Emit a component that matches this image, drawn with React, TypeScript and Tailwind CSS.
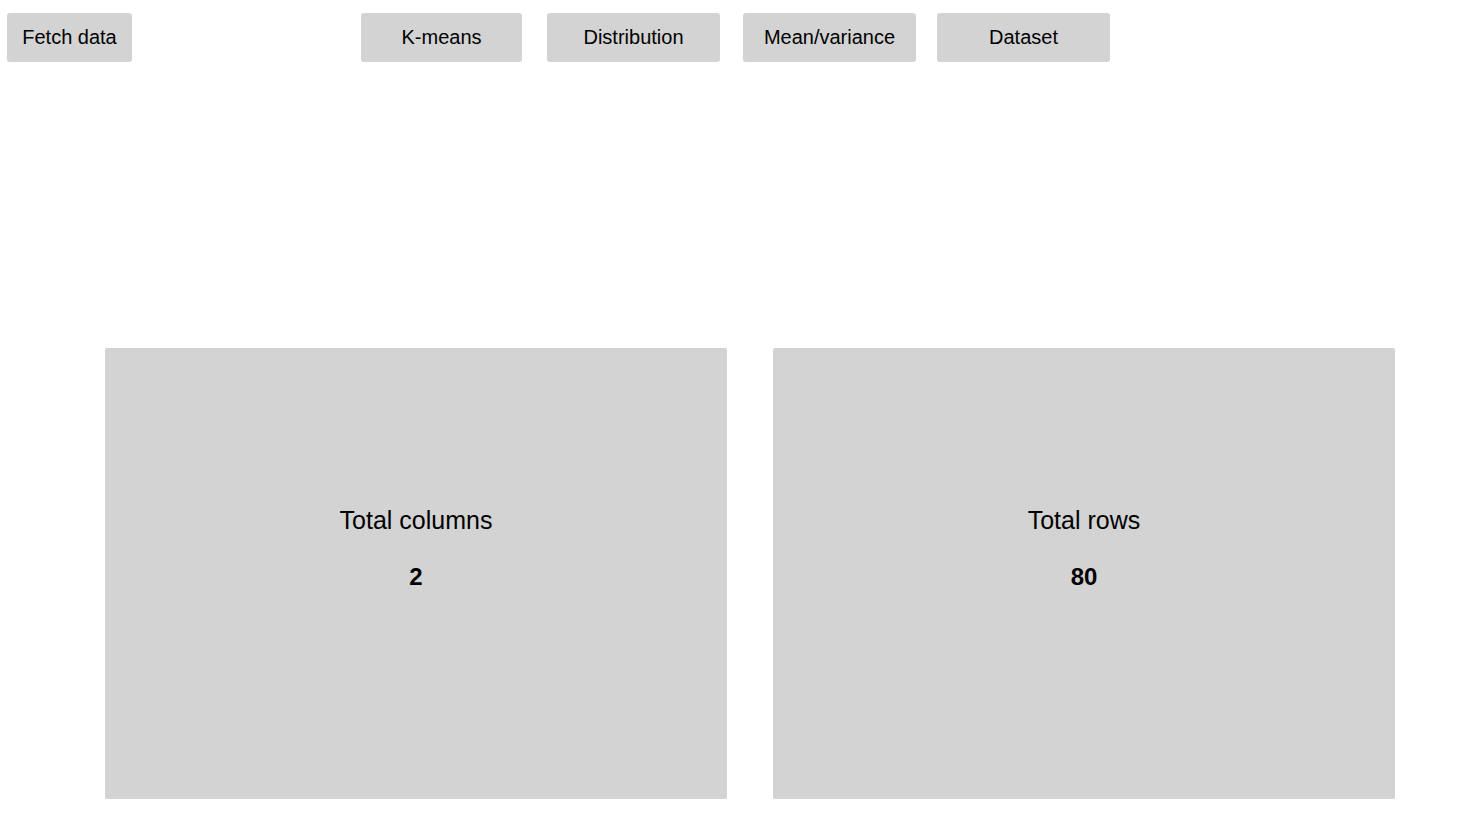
import { useState } from 'react';

const tabs = [
  { label: 'K-means', width: 'w-[161px]', ml: 'ml-[229px]' },
  { label: 'Distribution', width: 'w-[173px]', ml: 'ml-[25px]' },
  { label: 'Mean/variance', width: 'w-[173px]', ml: 'ml-[23px]' },
  { label: 'Dataset', width: 'w-[173px]', ml: 'ml-[21px]' },
];

function StatCard({ title, value }: { title: string; value: number }) {
  return (
    <div className="w-[622px] h-[451px] bg-[#d3d3d3] rounded-[2px] flex flex-col items-center justify-center pb-[50px]">
      <p className="text-[25px] leading-[30px]">{title}</p>
      <p className="text-[24px] leading-[30px] font-bold mt-[27px]">{value}</p>
    </div>
  );
}

export default function App() {
  const [active, setActive] = useState('Dataset');

  return (
    <div className="min-h-screen bg-white text-black font-['Liberation_Sans',Arial,sans-serif]">
      {/* Top bar */}
      <div className="flex items-center pt-[13px] pl-[7px]">
        <button className="h-[49px] w-[125px] bg-[#d3d3d3] rounded-[3px] text-[20px] pb-[2px]">Fetch data</button>
        {tabs.map((t) => (
          <button
            key={t.label}
            onClick={() => setActive(t.label)}
            className={`h-[49px] ${t.width} ${t.ml} bg-[#d3d3d3] rounded-[3px] text-[20px] pb-[2px]`}
            data-active={active === t.label}
          >
            {t.label}
          </button>
        ))}
      </div>

      {/* Stats */}
      <div className="flex gap-[46px] pl-[105px] mt-[286px]">
        <StatCard title="Total columns" value={2} />
        <StatCard title="Total rows" value={80} />
      </div>
    </div>
  );
}
